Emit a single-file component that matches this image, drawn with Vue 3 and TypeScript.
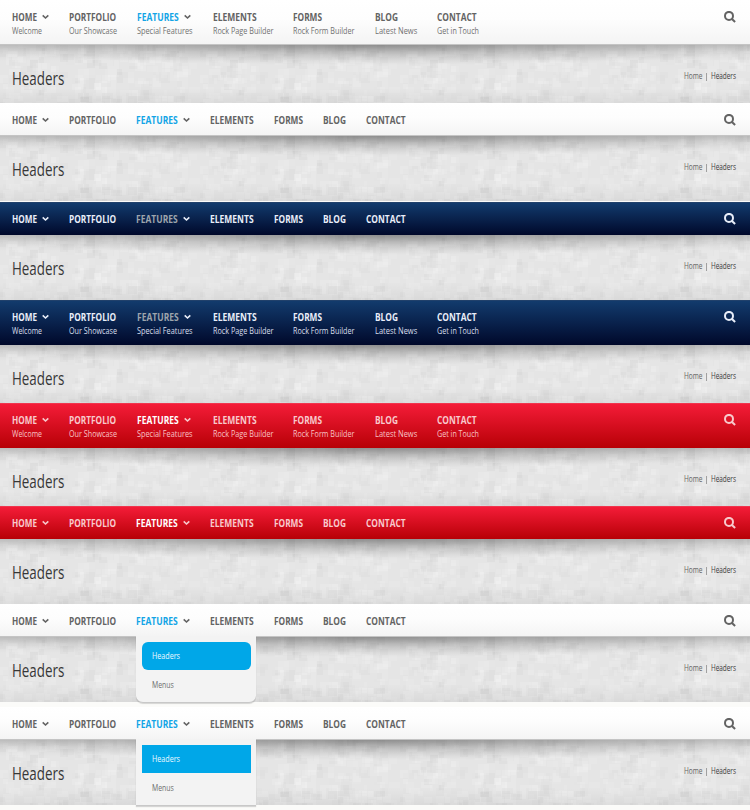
<script setup lang="ts">
import { h } from 'vue'

interface Item { label: string; w: number; sub: string; subW: number; arrow?: boolean; active?: boolean }
interface Header { theme: 'white' | 'navy' | 'red'; tall: boolean; body: number; foot?: number; menu?: 'round' | 'square' }

const items: Item[] = [
  { label: 'HOME', w: 25, sub: 'Welcome', subW: 30, arrow: true },
  { label: 'PORTFOLIO', w: 47.2, sub: 'Our Showcase', subW: 48 },
  { label: 'FEATURES', w: 41.7, sub: 'Special Features', subW: 55.5, arrow: true, active: true },
  { label: 'ELEMENTS', w: 43.6, sub: 'Rock Page Builder', subW: 60.5 },
  { label: 'FORMS', w: 29, sub: 'Rock Form Builder', subW: 61.4 },
  { label: 'BLOG', w: 23, sub: 'Latest News', subW: 42.2 },
  { label: 'CONTACT', w: 39.6, sub: 'Get in Touch', subW: 42 },
]

const headers: Header[] = [
  { theme: 'white', tall: true, body: 58 },
  { theme: 'white', tall: false, body: 66, foot: 1 },
  { theme: 'navy', tall: false, body: 65 },
  { theme: 'navy', tall: true, body: 58 },
  { theme: 'red', tall: true, body: 58 },
  { theme: 'red', tall: false, body: 65 },
  { theme: 'white', tall: false, body: 70, foot: 5, menu: 'round' },
  { theme: 'white', tall: false, body: 70, foot: 5, menu: 'square' },
]

// Condensed text: glyphs are fitted to the given width.
const Fit = (p: { text: string; w: number; h: number; base: number }) =>
  h('svg', { width: p.w, height: p.h, class: 'fit' }, [
    h('text', { x: 0, y: p.base, textLength: p.w, lengthAdjust: 'spacingAndGlyphs', fill: 'currentColor' }, p.text),
  ])
Fit.props = ['text', 'w', 'h', 'base']

// Mosaic paper texture: a seeded 200px wide tile repeated across each header.
let seed = 7
const rnd = () => {
  seed = (seed * 16807) % 2147483647
  return seed / 2147483647
}
interface Tile { x: number; y: number; w: number; h: number; c: string; o: number }
const tiles: Tile[] = []
for (let i = 0; i < 330; i++) {
  const size = 5 + Math.floor(rnd() * 3) * 3
  tiles.push({
    x: Math.floor(rnd() * 64) * 3,
    y: Math.floor(rnd() * 24) * 3,
    w: size,
    h: rnd() > 0.6 ? size : 6,
    c: rnd() > 0.42 ? '#fff' : '#8c8c8c',
    o: 0.018 + rnd() * 0.045,
  })
}
tiles.push({ x: 94, y: 38, w: 7, h: 7, c: '#fff', o: 0.12 }, { x: 80, y: 52, w: 9, h: 5, c: '#8c8c8c', o: 0.08 })
</script>

<template>
  <main class="page">
    <svg class="defs" width="0" height="0">
      <defs>
        <pattern id="mosaic" width="200" height="72" patternUnits="userSpaceOnUse">
          <rect v-for="(t, i) in tiles" :key="i" :x="t.x" :y="t.y" :width="t.w" :height="t.h" :fill="t.c" :fill-opacity="t.c === '#fff' ? t.o * 2.2 : t.o" />
        </pattern>
      </defs>
    </svg>
    <section v-for="(hd, n) in headers" :key="n" :class="['header', hd.theme]">
      <nav :class="['bar', { tall: hd.tall }]">
        <div v-for="it in items" :key="it.label" :class="['item', { active: it.active }]">
          <div class="top">
            <Fit class="label" :text="it.label" :w="it.w" :h="12" :base="9.5" />
            <svg v-if="it.arrow" class="arrow" width="7" height="6" viewBox="0 0 7 6"><path d="M.7 1.3 3.5 4 6.3 1.3" /></svg>
          </div>
          <Fit v-if="hd.tall" class="sub" :text="it.sub" :w="it.subW" :h="12" :base="10.7" />
          <div v-if="it.active && hd.menu" :class="['menu', hd.menu]">
            <div class="entry selected"><Fit text="Headers" :w="28" :h="12" :base="9.4" /></div>
            <div class="entry"><Fit text="Menus" :w="21.8" :h="12" :base="10" /></div>
          </div>
        </div>
        <svg class="search" width="12" height="12" viewBox="0 0 12 12"><circle cx="5" cy="4.9" r="4" /><path d="m7.7 7.7 3.4 3.3" /></svg>
      </nav>
      <div class="body" :style="{ height: (hd.body - (hd.foot ?? 0)) + 'px' }">
        <svg class="texture" width="750" height="100%"><rect width="750" height="72" fill="url(#mosaic)" /></svg>
        <div class="shade"></div>
        <Fit class="title" text="Headers" :w="52.3" :h="24" :base="19.6" />
        <div class="crumbs">
          <Fit text="Home" :w="18.5" :h="12" :base="9.4" />
          <span class="sep"></span>
          <Fit class="here" text="Headers" :w="25" :h="12" :base="9.4" />
        </div>
      </div>
      <div v-if="hd.foot" class="foot" :style="{ height: hd.foot + 'px' }"></div>
    </section>
  </main>
</template>

<style>
body { background: #fcfcfb; overflow: hidden; }
</style>

<style scoped>
.page { width: 750px; height: 810px; overflow: hidden; font-family: "Open Sans", "Noto Sans", sans-serif; }
.defs { position: absolute; }
.fit { display: block; overflow: visible; flex: none; }
.bar {
  box-sizing: border-box; height: 33px; padding: 11px 14.5px 0 12.2px;
  display: flex; align-items: flex-start; gap: 20px; position: relative; z-index: 2;
}
.bar.tall { height: 45px; }
.item { position: relative; flex: none; }
.top { display: flex; align-items: flex-start; gap: 5px; }
.label { font-size: 10.4px; font-weight: 700; }
.sub { font-size: 9.2px; }
.arrow { margin-top: 3px; fill: none; stroke: currentColor; stroke-width: 1.6; }
.search { margin: 0 0 0 auto; flex: none; fill: none; stroke: currentColor; stroke-width: 2; }

.white .bar { background: linear-gradient(#fff, #fdfdfd 45%, #f4f4f4); color: #636363; border-bottom: 1px solid #c4c4c4; }
.white .sub { color: #707070; }
.white .active .label { color: #13a5e6; }
.navy .bar { background: linear-gradient(#123b6d, #00082a); color: #e9eef9; border-top: 1px solid #21416b; padding-top: 10px; }
.navy .active .label { color: #9da4ac; }
.navy .sub { color: #d9dfec; }
.red .bar { background: linear-gradient(#f41c38, #b70006); color: #f8c9cc; border-top: 1px solid #f0354e; padding-top: 10px; }
.red .active .label { color: #fff; }
.red .sub { color: #f8c2c5; }

.body {
  box-sizing: border-box; position: relative; overflow: hidden; background: #e5e5e5;
  display: flex; justify-content: space-between; align-items: flex-start; padding: 20px 14.4px 0 12px;
}
.texture, .shade { position: absolute; left: 0; top: 0; }
.shade {
  width: 100%; height: 100%;
  background:
    radial-gradient(ellipse 56% 20px at 50% 0, rgba(0, 0, 0, .26), rgba(0, 0, 0, .09) 55%, transparent),
    linear-gradient(rgba(0, 0, 0, .16), rgba(0, 0, 0, .05) 7px, transparent 16px),
    linear-gradient(transparent 75%, rgba(0, 0, 0, .05));
}
.title { position: relative; font-size: 18.5px; color: #373737; }
.crumbs { position: relative; display: flex; margin-top: 5px; font-size: 9px; color: #646464; }
.sep { width: 1px; height: 8px; background: #a0a0a0; margin: 3px 4px 0 3.5px; }
.here { color: #3c3c3c; }
.foot { background: #fbfbf9; }

.menu {
  position: absolute; left: 0; top: 21px; width: 120px; height: 67px; box-sizing: border-box; padding: 6px 5.5px 0;
  background: #f3f3f3; border-bottom: 1px solid #c8c8c8; box-shadow: 0 1px 1px rgba(0, 0, 0, .15);
}
.menu.round { border-radius: 0 0 7px 7px; }
.entry { height: 28px; display: flex; align-items: center; padding-left: 10px; font-size: 9px; color: #6e6e6e; }
.entry.selected { background: #00a7e8; color: #edf9ff; }
.round .selected { border-radius: 6px; }
</style>
